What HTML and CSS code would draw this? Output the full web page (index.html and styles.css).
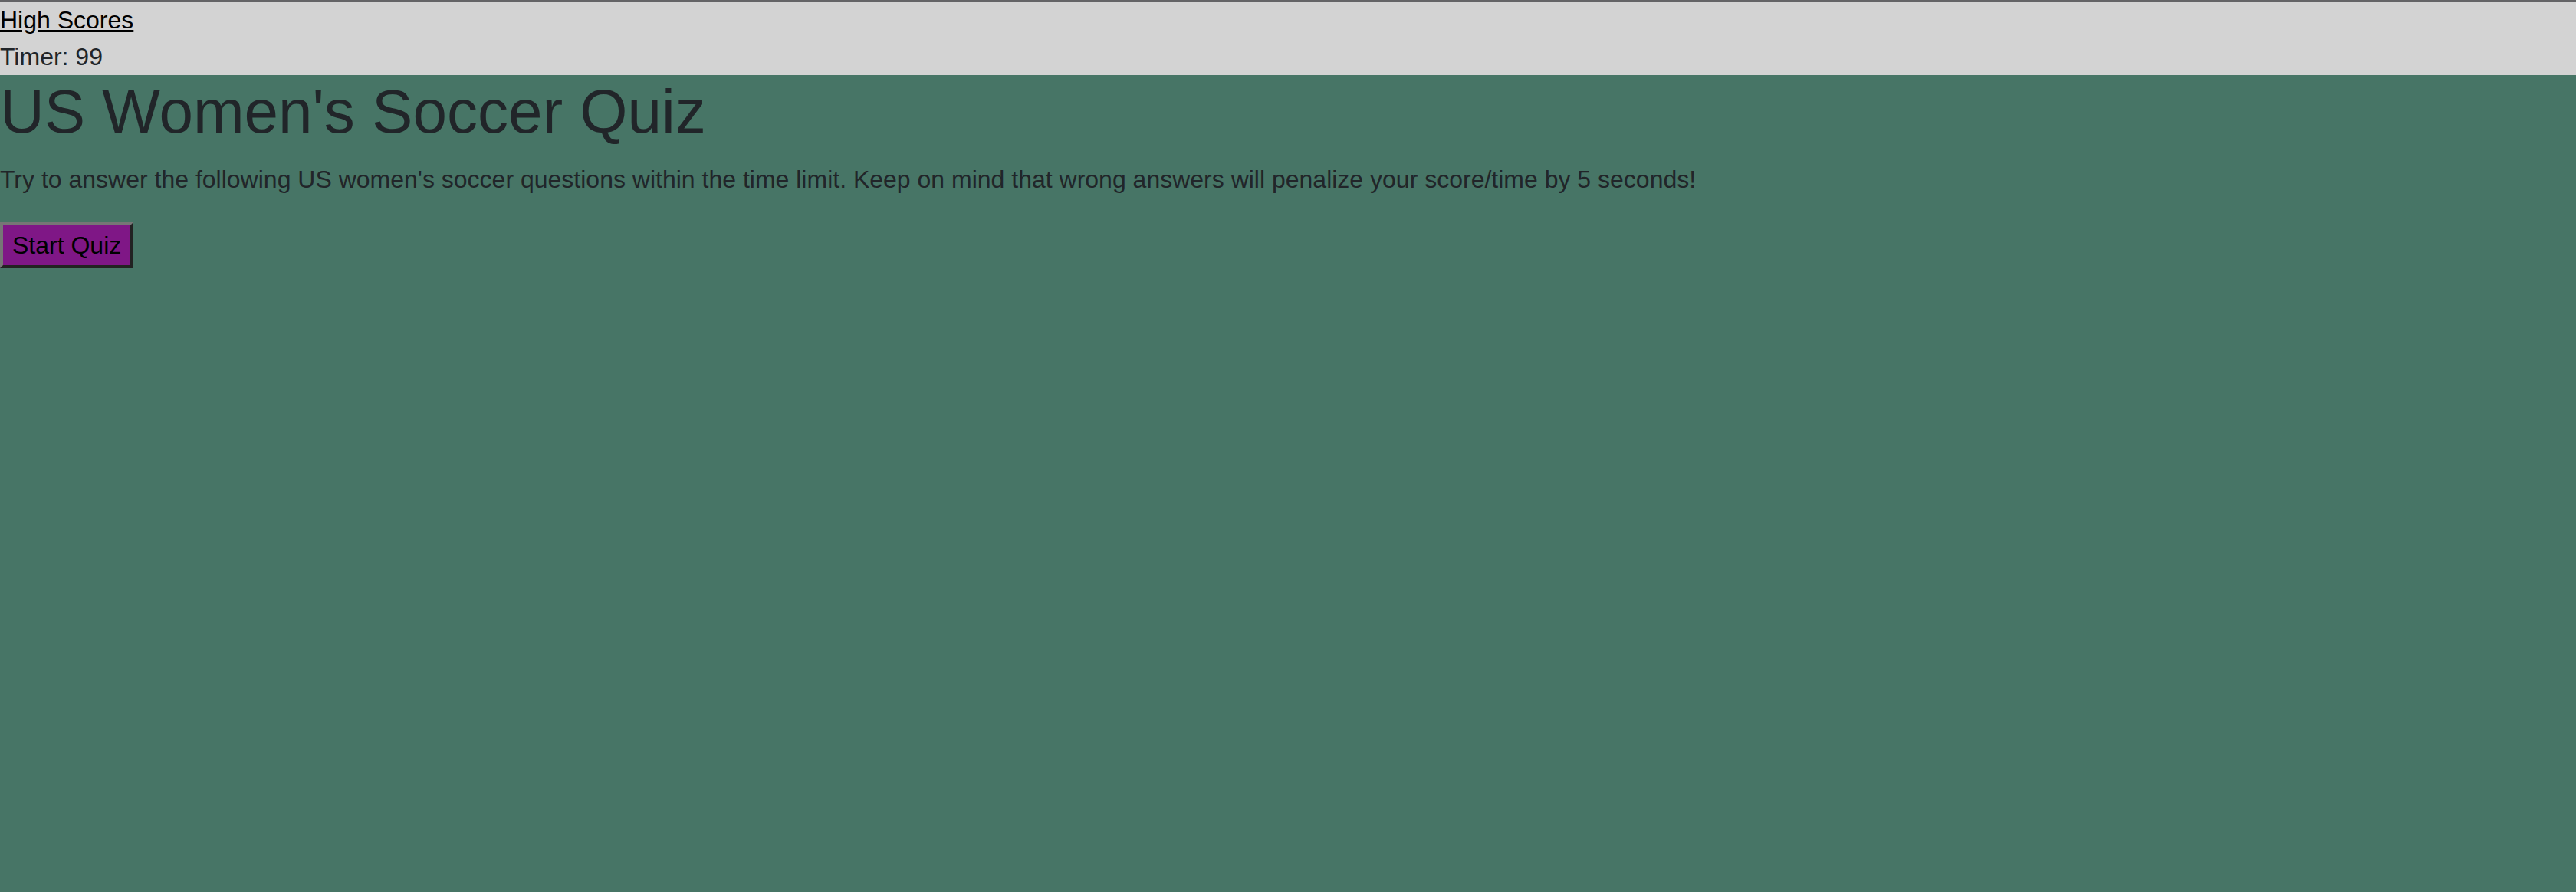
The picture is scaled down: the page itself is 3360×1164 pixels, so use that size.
FILE: index.html
```html
<!DOCTYPE html>
<html lang="en">
<head>
<meta charset="utf-8">
<title>US Women's Soccer Quiz</title>
<link rel="stylesheet" href="styles.css">
</head>
<body>
<header class="topbar">
  <div class="topbar-row"><a class="scores-link" href="#">High Scores</a></div>
  <div class="topbar-row">Timer: <span class="timer-value">99</span></div>
</header>
<main class="intro">
  <h1 class="intro-title">US Women's Soccer Quiz</h1>
  <p class="intro-text">Try to answer the following US women's soccer questions within the time limit. Keep on mind that wrong answers will penalize your score/time by 5 seconds!</p>
  <button class="start-btn" type="button">Start Quiz</button>
</main>
</body>
</html>
```

FILE: styles.css
```css
html, body {
  margin: 0;
  padding: 0;
}

body {
  background: #477566;
  color: #212529;
  font-family: "Liberation Sans", Arial, sans-serif;
  font-size: 32px;
  line-height: 1.5;
  min-height: 100vh;
}

.topbar {
  background: #d3d3d3;
  border-top: 2px solid #646466;
}

.topbar-row {
  line-height: 48px;
}

.scores-link {
  color: #000;
  text-decoration: underline;
}

.intro-title {
  margin: 0 0 16px;
  font-size: 80px;
  line-height: 1.2;
  font-weight: 500;
}

.intro-text {
  margin: 0 0 32px;
}

.start-btn {
  display: inline-block;
  margin: 0;
  font-family: "Liberation Sans", Arial, sans-serif;
  font-size: 32px;
  line-height: 48px;
  padding: 2px 12px;
  color: #000;
  background: #7f1786;
  border-width: 4px;
  border-style: solid;
  border-color: #767676 #222222 #222222 #767676;
  cursor: pointer;
}
```
